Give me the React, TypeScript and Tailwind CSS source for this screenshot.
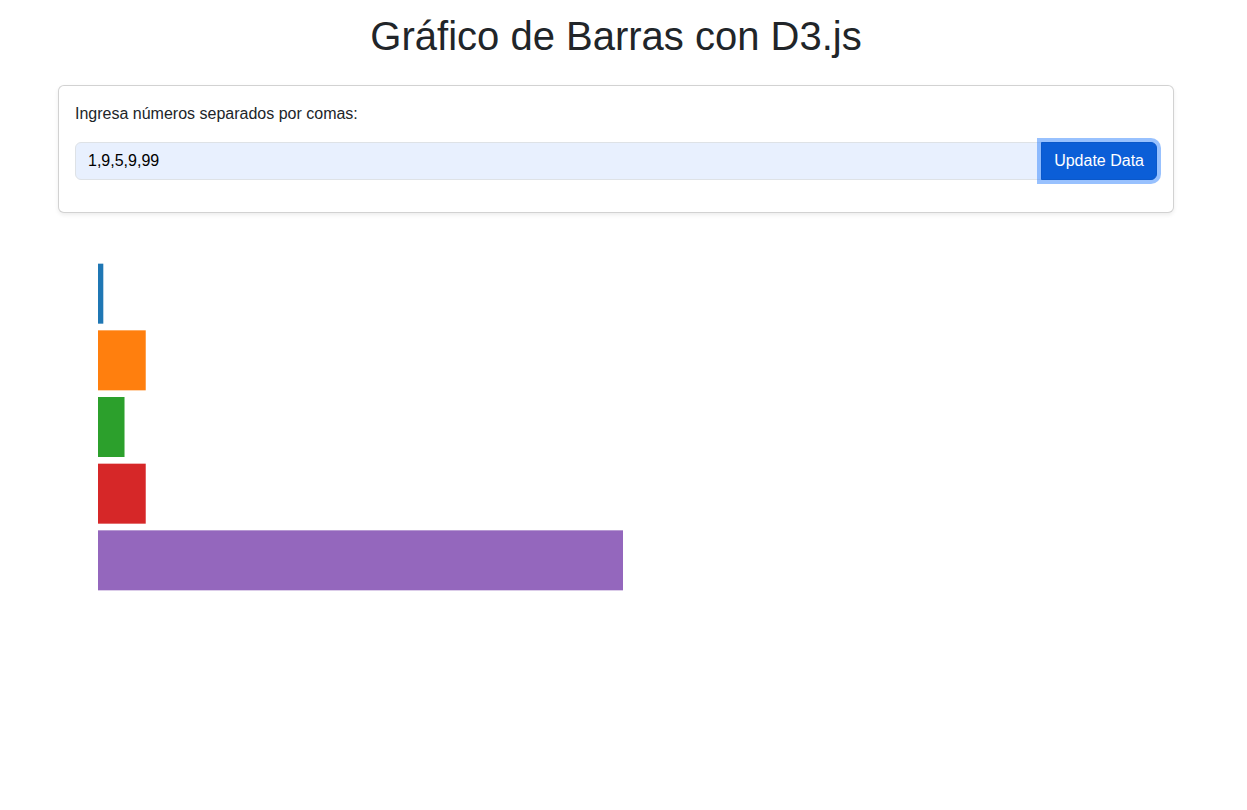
import React, { useState } from "react";

const COLORS = ["#1f77b4", "#ff7f0e", "#2ca02c", "#d62728", "#9467bd"];

type BarChartProps = {
  data: number[];
};

function BarChart({ data }: BarChartProps) {
  // chart box and margins, like a d3 setup
  const width = 600;
  const height = 400;
  const margin = { top: 20, right: 35, bottom: 40, left: 40 };
  const innerW = width - margin.left - margin.right;
  const innerH = height - margin.top - margin.bottom;

  // band scale with padding 0.1
  const pad = 0.1;
  const step = innerH / (data.length - pad + 2 * pad);
  const band = step * (1 - pad);
  const max = Math.max(...data, 1);

  return (
    <svg width={width} height={height} className="mt-6 block">
      <g transform={`translate(${margin.left},${margin.top})`}>
        {data.map((d, i) => (
          <rect
            key={i}
            x={0}
            y={pad * step + i * step}
            width={(d / max) * innerW}
            height={band}
            fill={COLORS[i % COLORS.length]}
          />
        ))}
      </g>
    </svg>
  );
}

export default function App() {
  const [value, setValue] = useState<string>("1,9,5,9,99");
  const [data, setData] = useState<number[]>([1, 9, 5, 9, 99]);

  // parse the input into numbers
  const updateData = () => {
    const nums = value
      .split(",")
      .map((s) => Number(s.trim()))
      .filter((n) => !isNaN(n));
    setData(nums);
  };

  return (
    <div className="w-[1232px] min-h-[810px] bg-white font-['Liberation_Sans',Arial,sans-serif] text-[#212529]">
      <div className="mx-auto max-w-[1140px] px-3 pt-3">
        <h1 className="mb-[25px] text-center text-[40px] font-medium leading-[1.2]">
          Gráfico de Barras con D3.js
        </h1>

        <div className="rounded-md border border-[rgba(0,0,0,0.175)] bg-white p-4 shadow-[0_0.125rem_0.25rem_rgba(0,0,0,0.075)]">
          <label htmlFor="numbers" className="mb-4 block text-base leading-6">
            Ingresa números separados por comas:
          </label>
          <div className="mb-4 flex">
            <input
              id="numbers"
              className="h-[38px] min-w-0 flex-1 rounded-l-md border border-[#dee2e6] bg-[#e8f0fe] px-3 py-1.5 text-base leading-6 text-black outline-none"
              value={value}
              onChange={(e) => setValue(e.target.value)}
            />
            <button
              type="button"
              onClick={updateData}
              className="relative z-10 -ml-px h-[38px] rounded-r-md border border-[#0a58ca] bg-[#0b5ed7] px-3 text-base leading-6 text-white ring-4 ring-[rgba(49,132,253,0.5)]"
            >
              Update Data
            </button>
          </div>
        </div>

        <BarChart data={data} />
      </div>
    </div>
  );
}
